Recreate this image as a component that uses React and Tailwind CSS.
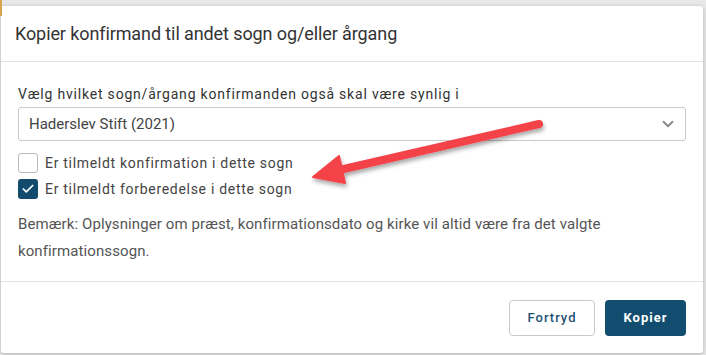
import { Check, ChevronDown } from 'lucide-react';

const Arrow = () => (
  <svg
    className="absolute left-0 top-0 pointer-events-none"
    width="706"
    height="355"
    viewBox="0 0 706 355"
  >
    <defs>
      <filter id="arrowShadow" x="-10%" y="-30%" width="120%" height="160%">
        <feDropShadow dx="1" dy="3" stdDeviation="2" floodColor="#000" floodOpacity="0.35" />
      </filter>
    </defs>
    <g filter="url(#arrowShadow)" fill="#f4424a" stroke="#f4424a" strokeLinecap="round" strokeLinejoin="round">
      <line x1="539" y1="124" x2="335" y2="171" strokeWidth="8" />
      <polygon points="313,177 339,156 345,183" strokeWidth="2" />
    </g>
  </svg>
);

export default function App() {
  return (
    <div className="relative w-[706px] h-[355px] overflow-hidden bg-[#e8e8e8] font-['Roboto',sans-serif]">
      <div className="absolute left-0 top-0 w-[2px] h-[16px] bg-[#d9a54a]" />
      <div className="ml-[1px] mt-[6px] w-[702px] h-[347px] bg-white rounded-[3px] shadow-[0_1px_4px_rgba(0,0,0,0.25)] flex flex-col">
        <div className="h-[56px] px-[14px] flex items-center border-b border-[#e3e3e3]">
          <h2 className="text-[18px] text-[#333] tracking-[-0.1px]">Kopier konfirmand til andet sogn og/eller årgang</h2>
        </div>

        <div className="px-[17px] pt-[24px] pb-[16px] border-b border-[#e3e3e3]">
          <label className="block text-[14px] leading-[17px] text-[#333] tracking-[0.8px] mb-[4px]">
            Vælg hvilket sogn/årgang konfirmanden også skal være synlig i
          </label>
          <div className="h-[34px] border border-[#c9c9c9] rounded-[3px] flex items-center justify-between pl-[10px] pr-[8px]">
            <span className="text-[15px] text-[#444]">Haderslev Stift (2021)</span>
            <ChevronDown size={18} strokeWidth={2.5} className="text-[#888]" />
          </div>

          <div className="mt-[12px] flex flex-col gap-[6px]">
            <div className="flex items-center gap-[7px] h-[20px]">
              <span className="w-[20px] h-[20px] rounded-[3px] border border-[#bbb] bg-white" />
              <span className="text-[14px] text-[#444] tracking-[0.7px]">Er tilmeldt konfirmation i dette sogn</span>
            </div>
            <div className="flex items-center gap-[7px] h-[20px]">
              <span className="w-[20px] h-[20px] rounded-[3px] bg-[#134b6e] flex items-center justify-center">
                <Check size={14} strokeWidth={3} className="text-white" />
              </span>
              <span className="text-[14px] text-[#444] tracking-[0.7px]">Er tilmeldt forberedelse i dette sogn</span>
            </div>
          </div>

          <p className="mt-[12px] text-[15px] leading-[27px] text-[#555] tracking-[0.1px]">
            Bemærk: Oplysninger om præst, konfirmationsdato og kirke vil altid være fra det valgte konfirmationssogn.
          </p>
        </div>

        <div className="flex-1 flex items-center justify-end gap-[10px] px-[17px]">
          <button className="h-[36px] w-[86px] rounded-[4px] border border-[#c8c8c8] bg-white text-[13px] text-[#1d5274] tracking-[1px] font-medium">
            Fortryd
          </button>
          <button className="h-[36px] w-[81px] rounded-[4px] bg-[#124d70] text-[13px] text-white tracking-[1px] font-bold">
            Kopier
          </button>
        </div>
      </div>
      <Arrow />
    </div>
  );
}
